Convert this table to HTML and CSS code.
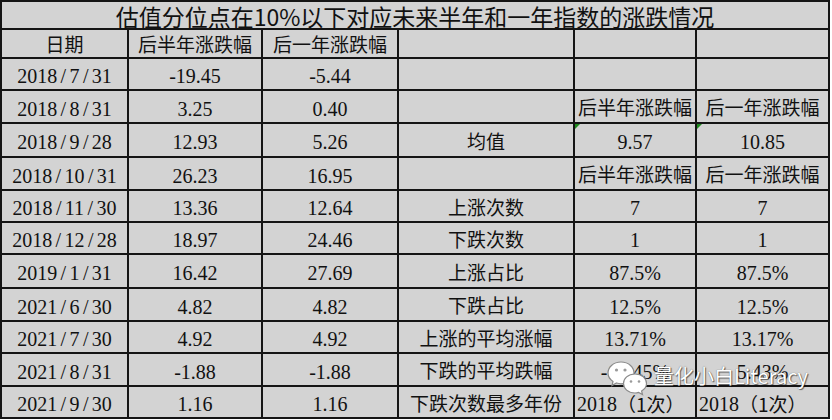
FILE: index.html
```html
<!DOCTYPE html>
<html lang="zh-CN">
<head>
<meta charset="utf-8">
<title>估值分位点</title>
<link rel="stylesheet" href="styles.css">
</head>
<body>
<div class="page">
  <div class="sheet">
    <div class="c title">估值分位点在10%以下对应未来半年和一年指数的涨跌情况</div>

    <div class="c zh">日期</div><div class="c zh">后半年涨跌幅</div><div class="c zh">后一年涨跌幅</div><div class="c"></div><div class="c"></div><div class="c"></div>

    <div class="c num">2018<span class="sl">/</span>7<span class="sl">/</span>31</div><div class="c num">-19.45</div><div class="c num">-5.44</div><div class="c"></div><div class="c"></div><div class="c"></div>

    <div class="c num">2018<span class="sl">/</span>8<span class="sl">/</span>31</div><div class="c num">3.25</div><div class="c num">0.40</div><div class="c"></div><div class="c zh">后半年涨跌幅</div><div class="c zh">后一年涨跌幅</div>

    <div class="c num">2018<span class="sl">/</span>9<span class="sl">/</span>28</div><div class="c num">12.93</div><div class="c num">5.26</div><div class="c zh">均值</div><div class="c num flag">9.57</div><div class="c num flag">10.85</div>

    <div class="c num">2018<span class="sl">/</span>10<span class="sl">/</span>31</div><div class="c num">26.23</div><div class="c num">16.95</div><div class="c"></div><div class="c zh">后半年涨跌幅</div><div class="c zh">后一年涨跌幅</div>

    <div class="c num">2018<span class="sl">/</span>11<span class="sl">/</span>30</div><div class="c num">13.36</div><div class="c num">12.64</div><div class="c zh">上涨次数</div><div class="c num">7</div><div class="c num">7</div>

    <div class="c num">2018<span class="sl">/</span>12<span class="sl">/</span>28</div><div class="c num">18.97</div><div class="c num">24.46</div><div class="c zh">下跌次数</div><div class="c num">1</div><div class="c num">1</div>

    <div class="c num">2019<span class="sl">/</span>1<span class="sl">/</span>31</div><div class="c num">16.42</div><div class="c num">27.69</div><div class="c zh">上涨占比</div><div class="c num">87.5%</div><div class="c num">87.5%</div>

    <div class="c num">2021<span class="sl">/</span>6<span class="sl">/</span>30</div><div class="c num">4.82</div><div class="c num">4.82</div><div class="c zh">下跌占比</div><div class="c num">12.5%</div><div class="c num">12.5%</div>

    <div class="c num">2021<span class="sl">/</span>7<span class="sl">/</span>30</div><div class="c num">4.92</div><div class="c num">4.92</div><div class="c zh">上涨的平均涨幅</div><div class="c num">13.71%</div><div class="c num">13.17%</div>

    <div class="c num">2021<span class="sl">/</span>8<span class="sl">/</span>31</div><div class="c num">-1.88</div><div class="c num">-1.88</div><div class="c zh">下跌的平均跌幅</div><div class="c num">-19.45%</div><div class="c num">5.43%</div>

    <div class="c num">2021<span class="sl">/</span>9<span class="sl">/</span>30</div><div class="c num">1.16</div><div class="c num">1.16</div><div class="c zh wide">下跌次数最多年份</div><div class="c num left">2018<span class="zh-in">（1次）</span></div><div class="c num left">2018<span class="zh-in">（1次）</span></div>
  </div>

  <div class="watermark">
    <svg class="wx" width="44" height="36" viewBox="0 0 44 36">
      <g fill="#ffffff" stroke="#8a8a8a" stroke-width="1.2">
        <path d="M15 2 C7 2 2 7.5 2 13 C2 16.5 4 19.5 7 21.5 L6 25.5 L10.5 23 C12 23.5 13.5 23.8 15 23.8 C23 23.8 28 18.5 28 13 C28 7.5 23 2 15 2 Z"/>
        <path d="M29 14 C22 14 17.5 18.5 17.5 23.5 C17.5 28.5 22 33 29 33 C30.3 33 31.5 32.8 32.6 32.4 L36.5 34.5 L35.6 31 C38.5 29.3 40.5 26.6 40.5 23.5 C40.5 18.5 36 14 29 14 Z"/>
      </g>
      <g fill="#9a9a9a">
        <circle cx="10.5" cy="10" r="1.6"/><circle cx="19" cy="10" r="1.6"/>
        <circle cx="25" cy="21.5" r="1.3"/><circle cx="33" cy="21.5" r="1.3"/>
      </g>
    </svg>
    <span class="wm-text">量化小白Literacy</span>
  </div>
</div>
</body>
</html>
```

FILE: styles.css
```css
html, body {
  margin: 0;
  padding: 0;
  background: #ffffff;
}

.page {
  position: relative;
  width: 832px;
  height: 420px;
}

.sheet {
  display: grid;
  grid-template-columns: 125px 132px 134px 174px 120px 131px;
  grid-template-rows: 26px 27px 30px 31px 32px 31px 30px 30px 32px 31px 30px 31px 30px;
  gap: 2px;
  padding: 2px;
  background: #141414;
  width: max-content;
}

.c {
  background: #d3d3d3;
  display: flex;
  align-items: center;
  justify-content: center;
  color: #111111;
  white-space: nowrap;
  position: relative;
  overflow: visible;
  min-width: 0;
}

.title {
  grid-column: 1 / -1;
  font-family: "Noto Sans CJK SC", "Noto Sans", sans-serif;
  font-size: 23px;
  line-height: 26px;
  padding-top: 1px;
}

.zh {
  font-family: "Noto Sans CJK SC", "Noto Sans", sans-serif;
  font-size: 19px;
  line-height: 24px;
  padding-top: 1px;
}

.num {
  font-family: "Liberation Serif", "Noto Sans CJK SC", serif;
  font-size: 20px;
  line-height: 24px;
  padding-top: 4px;
}

.sl {
  margin: 0 3.4px;
}

.left {
  justify-content: flex-start;
  padding-left: 2px;
}

.zh-in {
  font-family: "Noto Sans CJK SC", sans-serif;
  font-size: 19px;
}

.wide {
  z-index: 1;
}

.flag::before {
  content: "";
  position: absolute;
  left: 0;
  top: 0;
  width: 0;
  height: 0;
  border-top: 5px solid #1e8a1e;
  border-right: 5px solid transparent;
}

.watermark {
  position: absolute;
  left: 606px;
  top: 360px;
  display: flex;
  align-items: center;
  gap: 4px;
  z-index: 5;
}

.wm-text {
  font-family: "Noto Sans CJK SC", "Noto Sans", sans-serif;
  font-size: 20px;
  color: #ffffff;
  text-shadow: 0 0 1px #555, 1px 1px 1px rgba(0, 0, 0, 0.55);
  margin-top: -6px;
}
```
